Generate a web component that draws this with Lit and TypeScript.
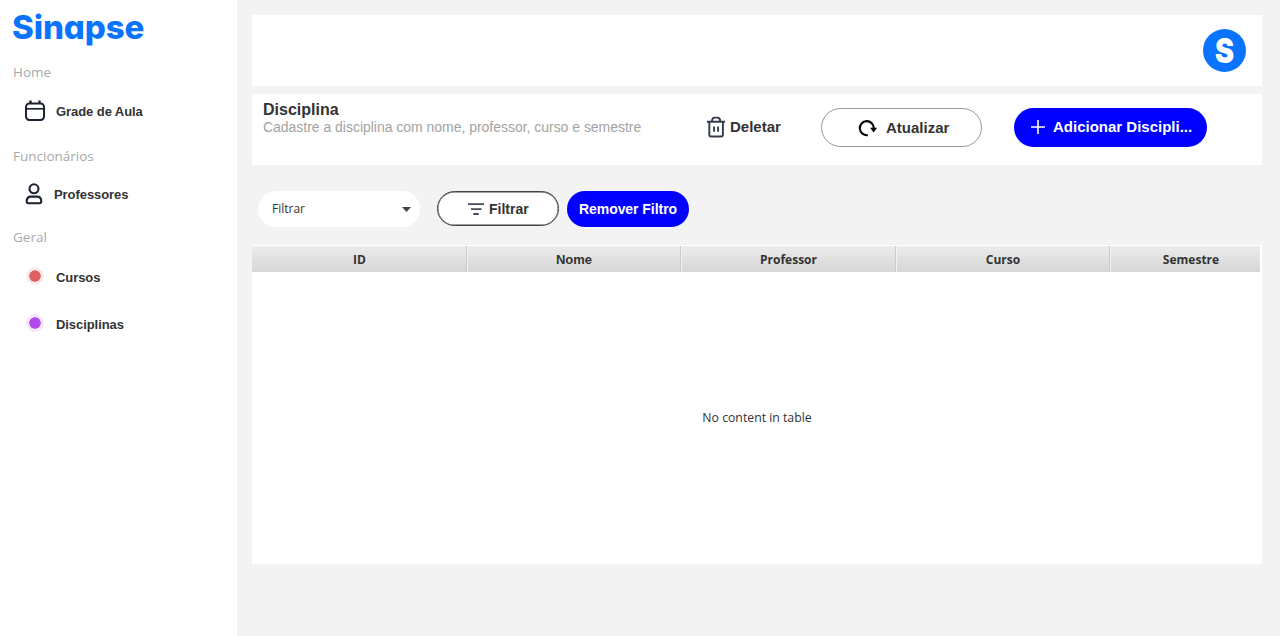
import { LitElement, html, css } from "lit";
import { customElement } from "lit/decorators.js";

const calendarIcon = html`<svg width="22" height="22" viewBox="0 0 22 22" fill="none" stroke="#1c2333" stroke-width="2">
  <rect x="2" y="3.400" width="18" height="16.600" rx="3.400"/><path d="M2 8.800h18" stroke-width="1.700"/><path d="M6.500 .5v3M15.500 .5v3" stroke-width="2.400"/></svg>`;

const personIcon = html`<svg width="18" height="22" viewBox="0 0 18 22" fill="none" stroke="#1c2333" stroke-width="2.100">
  <circle cx="9" cy="5.800" r="4.500"/><path d="M1.700 18.300c0-3 1.700-4.700 4.300-4.700h6c2.600 0 4.300 1.700 4.300 4.700 0 1.300-.6 1.900-1.900 1.900H3.600c-1.300 0-1.900-.6-1.900-1.900z"/></svg>`;

const trashIcon = html`<svg width="20" height="22" viewBox="0 0 20 22" fill="none" stroke="#343c4e" stroke-width="1.900">
  <path d="M1 5.700h18M3.300 5.700v13.100c0 1 .7 1.700 1.700 1.700h10.200c1 0 1.700-.7 1.700-1.700V5.700M6 5.300c0-2.300 1-3.700 2.800-3.700h2.600c1.800 0 2.800 1.400 2.800 3.700M8.100 10.500v5.200M12.100 10.500v5.200"/></svg>`;

const refreshIcon = html`<svg width="20" height="18" viewBox="0 0 20 18" fill="none" stroke="#000" stroke-width="2.100">
  <path d="M9.800 16.100A7 7 0 1 1 15.800 9.400"/><path d="M12.100 8.800h7l-3.500 4.600z" fill="#000" stroke="none"/></svg>`;

const plusIcon = html`<svg width="14" height="14" viewBox="0 0 14 14" stroke="#fff" stroke-width="1.600"><path d="M0 7h14M7 0v14"/></svg>`;

const filterIcon = html`<svg width="16" height="12" viewBox="0 0 16 12" stroke="#434a59" stroke-width="1.800"><path d="M0 1.200h16M3 6.200h10.500M5.300 11h5.500"/></svg>`;

@customElement("app-root")
export class AppRoot extends LitElement {
  static styles = css`
    * { box-sizing: border-box; }
    :host {
      display: flex;
      width: 1280px;
      height: 636px;
      overflow: hidden;
      background: #f3f3f3;
      color: #333;
      font-family: "Liberation Sans", Arial, sans-serif;
    }
    svg { display: block; flex: none; }
    .sidebar { width: 237px; background: #fff; padding: 6px 0 0 13px; flex: none; }
    .logo {
      height: 42px; margin-left: -1px;
      font: 780 33px/42px Inter, sans-serif;
      letter-spacing: -0.1px;
      font-feature-settings: "cv11";
      color: #0a74ff;
    }
    .section { font: 13.500px/20px "Open Sans", "Noto Sans", sans-serif; color: #a9a9a9; height: 20px; }
    .home { margin-top: 14px; }
    .staff { margin-top: 24px; }
    .general { margin-top: 22px; }
    .item { display: flex; align-items: center; height: 22px; font-size: 13px; font-weight: 700; line-height: 22px; letter-spacing: -0.07px; }
    .item span { padding-top: 2px; }
    .calendar { margin: 18px 0 0 11px; gap: 10px; }
    .person { margin: 17px 0 0 12px; gap: 11px; }
    .courses { margin: 18px 0 0 13px; gap: 12px; }
    .subjects { margin: 25px 0 0 13px; gap: 12px; }
    .courses span, .subjects span { padding-top: 3px; }
    .dot { width: 18px; height: 18px; border-radius: 50%; border: 3.500px solid #fcebeb; background: #e06062; background-clip: padding-box; }
    .purple { background-color: #b14aed; border-color: #f5e6fd; }
    .main { width: 1010px; margin-left: 15px; padding-top: 15px; flex: none; }
    .topbar { height: 71px; background: #fff; display: flex; justify-content: flex-end; align-items: center; padding-right: 16px; }
    .avatar {
      width: 43px; height: 43px; border-radius: 50%; background: #0a74ff; color: #fff;
      font: 900 34px/43px Inter, sans-serif; text-align: center;
    }
    .avatar span { display: block; transform: scaleX(0.84); }
    .heading { height: 71px; margin-top: 8px; background: #fff; display: flex; align-items: flex-start; padding-left: 11px; }
    .titles { width: 443px; padding-top: 7px; }
    .title { font-size: 16px; line-height: 17px; font-weight: 700; }
    .subtitle { font-size: 14px; line-height: 18px; color: #a3a3a3; white-space: nowrap; letter-spacing: -0.025px; }
    .button { display: flex; align-items: center; font-weight: 700; white-space: nowrap; }
    .delete { width: 115px; height: 22px; margin-top: 22px; font-size: 15px; gap: 4px; }
    .delete span { margin-top: -1px; }
    .refresh { width: 161px; height: 39px; margin-top: 14px; border: 1.500px solid #999; border-radius: 20px; font-size: 15px; padding-left: 36px; gap: 8px; }
    .add { width: 193px; height: 39px; margin: 14px 0 0 32px; border-radius: 20px; background: #00f; color: #fff; font-size: 15px; padding: 0 0 1px 17px; gap: 8px; }
    .add span { margin-top: -1px; }
    .filters { display: flex; height: 36px; margin: 26px 0 0 6px; }
    .select { width: 162px; height: 36px; border-radius: 18px; background: #fff; display: flex; align-items: center; justify-content: space-between; padding: 0 9px 0 14px; font: 12px/36px "Open Sans", sans-serif; }
    .apply { width: 122px; height: 35px; margin-left: 17px; border: 1.500px solid #444; border-radius: 18px; background: #fff; font-size: 14px; padding-left: 30px; gap: 5px; box-shadow: inset 0 0 0 0.400px #444; }
    .clear { width: 122px; height: 36px; margin-left: 8px; border-radius: 18px; background: #00f; color: #fff; font-size: 14px; letter-spacing: -0.05px; justify-content: center; }
    .table { height: 319px; margin-top: 18px; background: #fff; padding-right: 2px; }
    .columns { display: grid; grid-template-columns: 215px 214px 215px 214px 150px; height: 27px; background: linear-gradient(#ececec, #d6d6d6); border-top: 1px solid #fff; }
    .column { font: 700 12px/27px "Open Sans", sans-serif; height: 26px; text-align: center; border-right: 1px solid #cacaca; box-shadow: 1px 0 #f2f2f2; padding-left: 1px; }
    .arial { font: 700 13px/28px "Liberation Sans", Arial, sans-serif; }
    .last { padding-left: 12px; border: 0; box-shadow: none; }
    .empty { font: 12.250px/18px "Open Sans", sans-serif; text-align: center; margin-top: 137px; padding-left: 2px; }
  `;

  render() {
    return html`
      <nav class="sidebar">
        <div class="logo"><span>Sinapse</span></div>
        <div class="section home">Home</div>
        <div class="item calendar">${calendarIcon}<span>Grade de Aula</span></div>
        <div class="section staff">Funcionários</div>
        <div class="item person">${personIcon}<span>Professores</span></div>
        <div class="section general">Geral</div>
        <div class="item courses"><i class="dot"></i><span>Cursos</span></div>
        <div class="item subjects"><i class="dot purple"></i><span>Disciplinas</span></div>
      </nav>
      <main class="main">
        <header class="topbar"><div class="avatar"><span>S</span></div></header>
        <section class="heading">
          <div class="titles">
            <div class="title">Disciplina</div>
            <div class="subtitle">Cadastre a disciplina com nome, professor, curso e semestre</div>
          </div>
          <div class="button delete">${trashIcon}<span>Deletar</span></div>
          <div class="button refresh">${refreshIcon}<span>Atualizar</span></div>
          <div class="button add">${plusIcon}<span>Adicionar Discipli...</span></div>
        </section>
        <div class="filters">
          <div class="select"><span>Filtrar</span><svg width="9" height="5" viewBox="0 0 9 5"><path d="M0 0h9L4.500 5z" fill="#444"/></svg></div>
          <div class="button apply">${filterIcon}<span>Filtrar</span></div>
          <div class="button clear">Remover Filtro</div>
        </div>
        <section class="table">
          <div class="columns">
            <div class="column">ID</div>
            <div class="column arial">Nome</div>
            <div class="column">Professor</div>
            <div class="column">Curso</div>
            <div class="column last">Semestre</div>
          </div>
          <div class="empty">No content in table</div>
        </section>
      </main>
    `;
  }
}
